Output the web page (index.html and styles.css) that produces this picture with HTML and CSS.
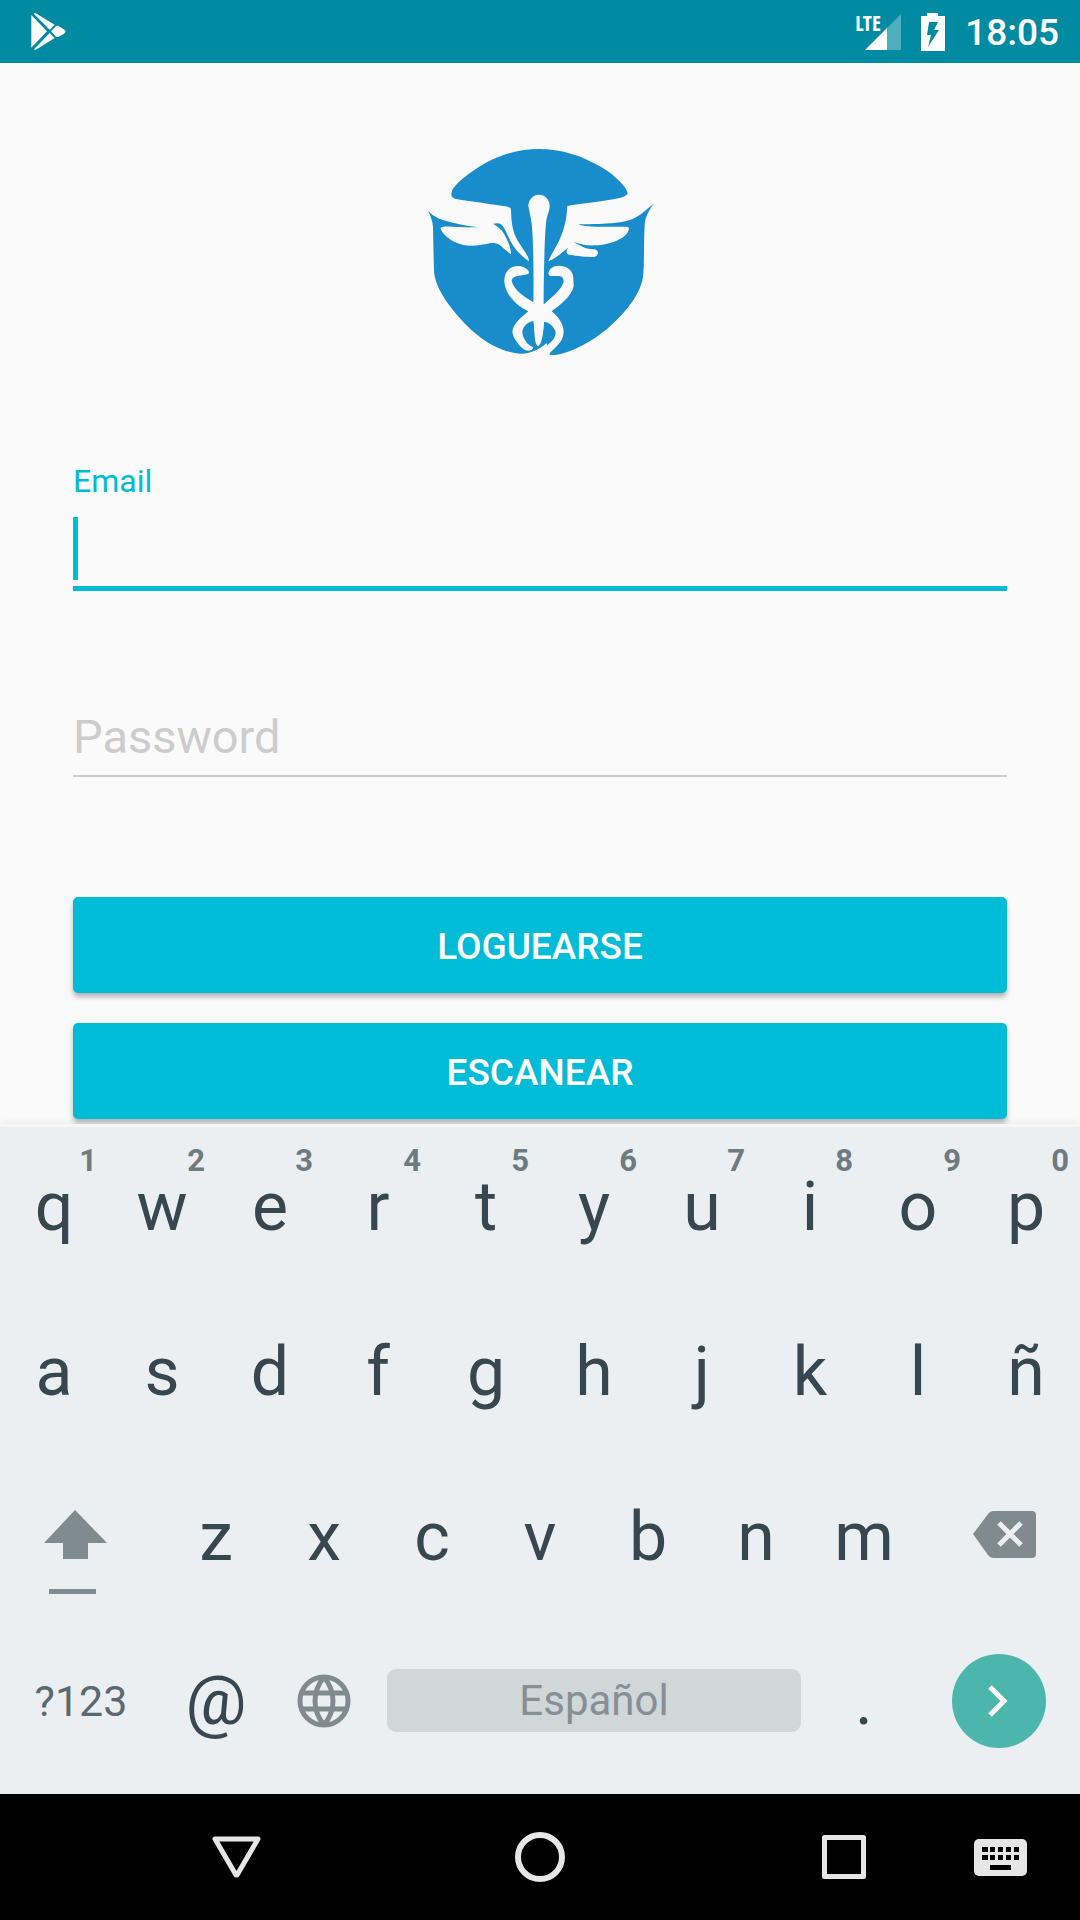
FILE: index.html
```html
<!DOCTYPE html>
<html lang="es">
<head>
  <meta charset="utf-8">
  <meta name="viewport" content="width=device-width, initial-scale=1">
  <title>Loguearse</title>
  <link rel="stylesheet" href="styles.css">
</head>
<body>
  <header class="status-bar">
    <svg class="status-play" width="36" height="38" viewBox="0 0 108 114" fill="#fff" aria-hidden="true">
      <path d="M1 6 L48 55 L1 104Z M10 0 Q13 0 18 3 L71 35 L56 50 L9 3Z M75 39 Q81 37 86 41 L98 49 Q104 53 104 56 Q103 60 98 63 L86 70 Q80 74 75 71 L60 55Z M56 60 L71 75 L17 109 Q12 112 9 109Z"/>
    </svg>
    <div class="status-icons">
      <span class="signal">
        <span class="signal-type">LTE</span>
        <svg width="36" height="36" viewBox="0 0 36 36" aria-hidden="true">
          <path d="M36 0V36H22V14Z" fill="#fff" fill-opacity=".3"/>
          <path d="M22 14V36H0Z" fill="#fff"/>
        </svg>
      </span>
      <svg width="24" height="38" viewBox="0 0 24 38" aria-hidden="true">
        <path d="M6 0H17V3H24V38H0V3H6Z" fill="#fff"/>
        <path d="M8 9H17L13 17H18L7 34L10 22H6Z" fill="#008ba3"/>
      </svg>
      <time class="clock">18:05</time>
    </div>
  </header>

  <main class="login">
    <svg class="logo" width="260" height="240" viewBox="0 0 780 720" role="img" aria-label="Logo">
      <path fill="#198ccb" d="M54 242C70 260 90 268 120 276C150 284 185 290 208 292C180 292 150 291 125 290C105 288 88 290 92 297C100 314 120 335 160 345C190 350 220 344 242 339C262 337 272 345 280 355L303 373C303 350 290 322 276 302C266 290 256 286 249 281C262 278 272 279 278 287C288 302 296 325 310 348C325 370 345 386 357 394C357 376 335 355 322 330C308 305 304 280 303 240C303 232 295 230 280 228C240 222 190 214 150 209C126 205 122 200 125 188C126 170 160 142 190 122C260 72 330 57 387 57C450 57 515 75 580 115C610 133 652 172 653 190C650 200 630 204 610 208C560 217 500 222 472 228C470 270 462 300 448 330C440 350 422 375 415 394C435 386 455 370 476 352C468 362 466 371 480 375C500 378 530 381 550 381C565 380 565 366 562 362C556 357 550 357 540 357C520 354 505 343 490 335C510 343 530 347 555 346C600 345 650 325 656 300C658 290 655 290 640 290C600 290 525 293 505 283C540 283 600 282 630 277C685 270 705 240 730 222C715 245 705 262 704 285C701 340 703 390 700 430C698 490 640 555 590 598C545 635 485 668 440 674C425 677 415 675 418 668L410 640C385 660 360 671 335 671C255 668 190 610 150 565C110 520 72 465 72 420C71 390 70 340 69 290C67 270 62 258 54 242Z"/>
      <path fill="#fafafa" d="M355 228C362 265 366 270 368 320C371 400 371 450 370 530H401C401 430 404 320 408 280C410 255 418 250 419 228A32 34 0 1 0 355 228Z"/>
      <path fill="#fafafa" d="M415 432C417 415 430 406 450 407C470 409 490 420 490 445L491 468C485 500 450 525 425 544C450 565 461 585 461 607C460 640 430 655 418 672L396 655C424 640 437 624 437 605C432 590 415 575 402 576C402 600 395 648 384 648C372 645 374 590 370 573C350 575 336 595 337 608C340 630 355 645 370 652C368 662 355 665 345 660C325 648 308 620 307 605C310 580 335 562 355 544C315 525 285 490 283 455C282 425 300 408 325 408C345 409 358 420 357 430C345 440 310 432 305 452C310 480 350 505 370 516L402 523C420 505 455 480 461 455C460 430 440 440 420 438Z"/>
    </svg>

    <form class="form">
      <div class="field field-focused">
        <label class="field-label" for="email">Email</label>
        <input class="field-input" id="email" type="email" autocomplete="off">
        <span class="caret"></span>
      </div>
      <div class="field">
        <input class="field-input" id="password" type="password" placeholder="Password" aria-label="Password" autocomplete="off">
      </div>
      <div class="actions">
        <button class="action" type="submit">LOGUEARSE</button>
        <button class="action" type="button">ESCANEAR</button>
      </div>
    </form>
  </main>

  <section class="keyboard" aria-label="Teclado">
    <div class="key-row">
      <button class="key" type="button">q<span class="hint">1</span></button>
      <button class="key" type="button">w<span class="hint">2</span></button>
      <button class="key" type="button">e<span class="hint">3</span></button>
      <button class="key" type="button">r<span class="hint">4</span></button>
      <button class="key" type="button">t<span class="hint">5</span></button>
      <button class="key" type="button">y<span class="hint">6</span></button>
      <button class="key" type="button">u<span class="hint">7</span></button>
      <button class="key" type="button">i<span class="hint">8</span></button>
      <button class="key" type="button">o<span class="hint">9</span></button>
      <button class="key" type="button">p<span class="hint">0</span></button>
    </div>
    <div class="key-row">
      <button class="key" type="button">a</button>
      <button class="key" type="button">s</button>
      <button class="key" type="button">d</button>
      <button class="key" type="button">f</button>
      <button class="key" type="button">g</button>
      <button class="key" type="button">h</button>
      <button class="key" type="button">j</button>
      <button class="key" type="button">k</button>
      <button class="key" type="button">l</button>
      <button class="key" type="button">ñ</button>
    </div>
    <div class="key-row">
      <button class="key key-wide" type="button" aria-label="Mayúsculas">
        <svg width="162" height="165" viewBox="0 0 162 165" fill="#808b8f" aria-hidden="true">
          <path d="M75 56L107 89H88V105H63V89H44Z"/>
          <path d="M49 135H96V140H49Z"/>
        </svg>
      </button>
      <button class="key" type="button">z</button>
      <button class="key" type="button">x</button>
      <button class="key" type="button">c</button>
      <button class="key" type="button">v</button>
      <button class="key" type="button">b</button>
      <button class="key" type="button">n</button>
      <button class="key" type="button">m</button>
      <button class="key key-wide" type="button" aria-label="Borrar">
        <svg width="162" height="165" viewBox="0 0 162 165" aria-hidden="true">
          <path d="M75 57H114Q118 57 118 61V100Q118 104 114 104H75Q72 104 70 101L55 80L70 60Q72 57 75 57Z" fill="#808b8f"/>
          <path d="M81 69L103 91M103 69L81 91" stroke="#ebeff2" stroke-width="5" fill="none"/>
        </svg>
      </button>
    </div>
    <div class="key-row key-row-bottom">
      <button class="key key-wide key-symbols" type="button">?123</button>
      <button class="key" type="button">@</button>
      <button class="key" type="button" aria-label="Idioma">
        <svg width="54" height="54" viewBox="0 0 54 54" fill="none" stroke="#808b8f" stroke-width="5" aria-hidden="true">
          <circle cx="27" cy="27" r="24"/>
          <path d="M5 19H49M5 35H49"/>
          <path d="M27 3Q18 14 18 27T27 51M27 3Q36 14 36 27T27 51"/>
        </svg>
      </button>
      <button class="key-space" type="button">Español</button>
      <button class="key" type="button">.</button>
      <button class="key key-wide" type="button" aria-label="Siguiente">
        <svg width="94" height="94" viewBox="0 0 94 94" aria-hidden="true">
          <circle cx="47" cy="47" r="47" fill="#4db6ac"/>
          <path d="M38 33L52 47L38 61" fill="none" stroke="#fff" stroke-width="5"/>
        </svg>
      </button>
    </div>
  </section>

  <nav class="nav-bar" aria-label="Sistema">
    <button class="nav-button nav-back" type="button" aria-label="Atrás">
      <svg width="50" height="50" viewBox="0 0 50 50" fill="none" stroke="#e6e6e6" stroke-width="5" stroke-linejoin="round" aria-hidden="true"><path d="M4 7H47L26 43H25Z"/></svg>
    </button>
    <button class="nav-button nav-home" type="button" aria-label="Inicio">
      <svg width="50" height="50" viewBox="0 0 50 50" fill="none" stroke="#e6e6e6" stroke-width="6" aria-hidden="true"><circle cx="25" cy="25" r="22"/></svg>
    </button>
    <button class="nav-button nav-recents" type="button" aria-label="Recientes">
      <svg width="50" height="50" viewBox="0 0 50 50" fill="none" stroke="#e6e6e6" stroke-width="5" stroke-linejoin="round" aria-hidden="true"><path d="M5.500 5.500H44.500V44.500H5.500Z"/></svg>
    </button>
    <button class="nav-button nav-ime" type="button" aria-label="Cambiar teclado">
      <svg width="54" height="38" viewBox="0 0 54 38" aria-hidden="true">
        <rect x="1" y="1" width="53" height="37" rx="5" fill="#e6e6e6"/>
        <path d="M9 9h6v5H9zm8 0h5v5h-5zm8 0h5v5h-5zm8 0h5v5h-5zm8 0h5v5h-5zM9 17h6v5H9zm8 0h5v5h-5zm8 0h5v5h-5zm8 0h5v5h-5zm8 0h5v5h-5zM17 27h21v5H17z" fill="#000"/>
      </svg>
    </button>
  </nav>
</body>
</html>
```
FILE: styles.css
```css
* {
  box-sizing: border-box;
}

body {
  margin: 0;
  min-height: 100vh;
  display: flex;
  flex-direction: column;
  background: #fafafa;
  font-family: Roboto, "Liberation Sans", sans-serif;
}

svg {
  display: block;
}

button,
input {
  margin: 0;
  padding: 0;
  border: 0;
  background: none;
  font-family: inherit;
}

/* Status bar */

.status-bar {
  display: flex;
  align-items: center;
  justify-content: space-between;
  height: 63px;
  padding: 0 21px 0 31px;
  background: #008ba3;
  color: #fff;
}

.status-icons {
  display: flex;
  align-items: center;
  gap: 20px;
}

.signal {
  position: relative;
}

.signal-type {
  position: absolute;
  top: 0;
  left: -10px;
  font: 700 21px/18px "Open Sans Condensed", "Roboto Condensed", "Liberation Sans Narrow", Roboto, sans-serif;
}

.clock {
  padding-top: 2px;
  font-size: 37px;
  font-weight: 500;
  line-height: 44px;
}

/* Login form */

.login {
  flex: 1;
  padding: 67px 73px 5px;
}

.logo {
  margin: 0 auto;
}

.form {
  margin-top: 93px;
}

.field {
  position: relative;
  margin-bottom: 106px;
}

.field-label {
  display: block;
  font-size: 32px;
  line-height: 36px;
  color: #00bcd4;
}

.field-input {
  display: block;
  width: 100%;
  height: 80px;
  border-bottom: 2px solid #ccc;
  font-size: 47px;
  color: #212121;
  outline: none;
}

.field-focused .field-input {
  height: 92px;
  border-bottom: 5px solid #00bcd4;
  caret-color: transparent;
}

.field-input::placeholder {
  color: #ccc;
  opacity: 1;
}

.caret {
  position: absolute;
  left: 0;
  bottom: 11px;
  width: 5px;
  height: 63px;
  background: #00bcd4;
}

.actions {
  display: grid;
  gap: 30px;
  margin-top: 120px;
}

.action {
  height: 96px;
  padding-top: 2px;
  border-radius: 5px;
  background: #00bcd7;
  box-shadow: 0 4px 5px rgba(0, 0, 0, .28);
  color: #fff;
  font-size: 37px;
  font-weight: 500;
}

/* On-screen keyboard */

.keyboard {
  position: relative;
  padding-bottom: 12px;
  background: #ebeff2;
  box-shadow: inset 0 3px #f5f7f8, 0 -2px 6px rgba(0, 0, 0, .06);
}

.key-row {
  display: flex;
  height: 165px;
}

.key-row-bottom {
  height: 163px;
  align-items: center;
}

.key {
  position: relative;
  flex: 108 1 0;
  display: flex;
  align-items: center;
  justify-content: center;
  min-width: 0;
  font-size: 68px;
  line-height: 80px;
  color: #37474f;
}

.key-wide {
  flex-grow: 162;
}

.key-symbols {
  font-size: 43px;
  color: #5a696f;
}

.hint {
  position: absolute;
  top: 19px;
  right: 11px;
  font-size: 31px;
  font-weight: 700;
  line-height: 36px;
  color: #6d7a80;
}

.key-space {
  flex: 414 1 0;
  height: 63px;
  margin: 0 9px;
  border-radius: 9px;
  background: #d1d6d9;
  font-size: 42px;
  color: #868f96;
}

/* System navigation */

.nav-bar {
  display: grid;
  grid-template-columns: 160fr 152fr 152fr 152fr 152fr 152fr 160fr;
  height: 126px;
  background: #000;
}

.nav-button {
  display: grid;
  place-items: center;
}

.nav-back {
  grid-column: 2;
}

.nav-home {
  grid-column: 4;
}

.nav-recents {
  grid-column: 6;
}

.nav-ime {
  grid-column: 7;
}
```
